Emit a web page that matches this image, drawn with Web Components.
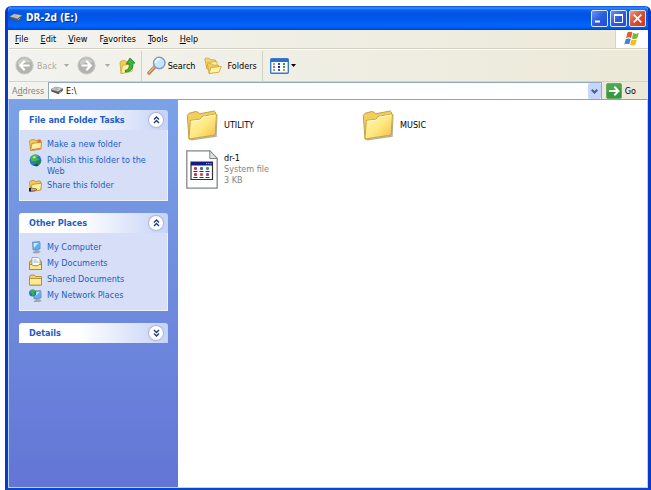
<!DOCTYPE html>
<html lang="en">
<head>
<meta charset="utf-8">
<title>DR-2d (E:)</title>
<style>
  html, body { margin: 0; }
  body {
    min-height: 100vh; box-sizing: border-box; padding: 6px 0 0 5px;
    display: flex; background: #fff; color: #000;
    font: 9px/12px "DejaVu Sans Condensed", "Noto Sans", sans-serif;
  }
  u { text-underline-offset: 1px; }
</style>
</head>
<body>
<xp-window>
  <xp-titlebar slot="title">DR-2d (E:)</xp-titlebar>
  <xp-menubar slot="bars">
    <button><u>F</u>ile</button><button><u>E</u>dit</button><button><u>V</u>iew</button><button>F<u>a</u>vorites</button><button><u>T</u>ools</button><button><u>H</u>elp</button>
  </xp-menubar>
  <xp-toolbar slot="bars"></xp-toolbar>
  <xp-addressbar slot="bars"></xp-addressbar>
  <xp-sidebar slot="side">
    <xp-panel heading="File and Folder Tasks" open>
      <xp-link icon="newfolder">Make a new folder</xp-link>
      <xp-link icon="globe">Publish this folder to the Web</xp-link>
      <xp-link icon="share">Share this folder</xp-link>
    </xp-panel>
    <xp-panel heading="Other Places" open>
      <xp-link icon="computer">My Computer</xp-link>
      <xp-link icon="documents">My Documents</xp-link>
      <xp-link icon="smallfolder">Shared Documents</xp-link>
      <xp-link icon="network">My Network Places</xp-link>
    </xp-panel>
    <xp-panel heading="Details"></xp-panel>
  </xp-sidebar>
  <xp-file icon="folder" name="UTILITY"></xp-file>
  <xp-file icon="folder" name="MUSIC"></xp-file>
  <xp-file icon="sysfile" name="dr-1">System file<br>3 KB</xp-file>
</xp-window>

<script>
const folderShape = `<path d="M.5 3.500 1.500 2l3.500-.6L6.500 2.600l4.600-.6.6 1v7.700L1.700 12.500z" fill="#f3cd59" stroke="#b98a2c" stroke-width=".8"/><path d="M1.700 12.500 3 5.400l9.600-1.200-.8 6.800z" fill="#fff0a0" stroke="#b98a2c" stroke-width=".8"/>`;
const monitorShape = `<path d="M3.500 1.200 10.500.5 11 8 4 9z" fill="#58b0f5" stroke="#5f7fae" stroke-width=".7"/><path d="M4.600 2.200 9.700 1.700l-4.800 5z" fill="#cfeeff"/><path d="m10.500.8 1.300.7.2 6-1 .5z" fill="#a7b6cf"/><path d="m6 9 3-.4.5 1.600 1.800.5-2 1.300H5l-1.200-.8 2.400-.6z" fill="#a4acbc" stroke="#77839a" stroke-width=".4"/>`;
const dots = (x, y, dx, dy, r) => {
  const c = ["#d03058", "#3868d8", "#2a9d6c", "#b83a50", "#d05050", "#8048c0"];
  let s = "";
  for (let j = 0; j < 2; j++) for (let i = 0; i < 3; i++)
    s += `<rect x="${x + i * dx}" y="${y + j * dy}" width="${r}" height="${r}" rx="1" fill="${c[j * 3 + i]}"/>`;
  return s;
};
const ICONS = {
  drive: [14, 10, `<path d="M1 3.4 5.5 1l7.2 1.4.3 2-4.6 3.8L1.4 5.4z" fill="#55585a"/><path d="M1 3.4 5.5 1l7.2 1.4-4.5 3z" fill="#d3d6d7" stroke="#8d9294" stroke-width=".6"/><path d="m3.4 3.2 2.5-1.1 3.7.8-2 1.2z" fill="#a9afb1"/><path d="m9 6.8 2-1.6" stroke="#70c060"/>`],
  back: [19, 19, `<circle cx="9.5" cy="9.5" r="8.6" fill="#b3b3ae" stroke="#c9c9c4"/><path d="M3 6a7.4 7.4 0 0 1 13 0c-4 1-8 0-13 3z" fill="#cbcbc7"/><path d="M9.7 4.8 5.2 9.5l4.5 4.7M5.5 9.5h9" fill="none" stroke="#fff" stroke-width="2.2"/>`],
  forward: [19, 19, `<circle cx="9.5" cy="9.5" r="8.6" fill="#b3b3ae" stroke="#c9c9c4"/><path d="M3 6a7.4 7.4 0 0 1 13 0c-4 1-8 0-13 3z" fill="#cbcbc7"/><path d="m9.3 4.8 4.5 4.7-4.5 4.7M13.5 9.5h-9" fill="none" stroke="#fff" stroke-width="2.2"/>`],
  up: [17, 18, `<path d="M1 5.5 2 4l4-.6 1 1.2 5-.6V14L2 16.5z" fill="#f0ce55" stroke="#c39a32" stroke-width=".7"/><path d="m2 16.5 1.6-8.2 10.6-1.6L13 14.4z" fill="#fff2a0" stroke="#caa03c" stroke-width=".7"/><path d="M6.3 13.2c3.4-.4 4.3-3 3.8-6.4l-2.9.3L11 1l5 5-2.4.3c.9 5.2-1.6 8.400-7.200 8.700z" fill="#3db53a" stroke="#1f7e25" stroke-width=".8"/>`],
  search: [20, 19, `<path d="m2 17 6-6.500" stroke="#b87c48" stroke-width="3.400" stroke-linecap="round"/><path d="m2 16.500 5.500-6" stroke="#f0b880" stroke-width="1.400" stroke-linecap="round"/><circle cx="12.300" cy="7" r="5.700" fill="#c6e6fb" stroke="#7d9cc4" stroke-width="1.500"/><path d="M8.500 7a4 4 0 0 1 4-4" fill="none" stroke="#fff" stroke-width="1.800"/>`],
  folders: [18, 18, `<path d="M.8 2 2 1l3.500.5 1 1.200 5 .3v7L3 12z" fill="#f7d566" stroke="#c9a03a" stroke-width=".8"/><path d="m3 12 .5-6.500L13 4.500V11z" fill="#fff0a4" stroke="#c9a03a" stroke-width=".7"/><path d="m3.500 7.500 1-1 3.200.3 1 1.200 6 .3v6L5 16.500z" fill="#f3cd58" stroke="#c9a03a" stroke-width=".7"/><path d="m5 16.500 2-6 10.300-1-2.300 5.700z" fill="#fff3a8" stroke="#c9a03a" stroke-width=".8"/>`],
  views: [19, 16, `<rect x=".7" y=".7" width="17.600" height="14.600" rx="1" fill="#fff" stroke="#3a78c8" stroke-width="1.400"/><path d="M1 1h17v3H1z" fill="#2870cc"/><g>` +
    [[3, "#7ba3d8"], [8, "#4050c0"], [13, "#409858"]].map(([x, c], i) => [5, 8, 11].map((y, j) => `<rect x="${x}" y="${y}" width="2" height="2" fill="${j == 1 && i == 0 ? "#d86050" : j == 1 && i == 1 ? "#203090" : j == 2 && i == 2 ? "#d09030" : c}"/>`).join("")).join("") + `</g>`],
  flag: [17, 16, `<path d="M3.500 1.500C5 .4 6.700.6 8.400 1.500L7 7c-1.500-.9-3-.9-5 0z" fill="#e8592b"/><path d="M9.200 2c1.800.9 3.600.9 5.600-.2l-1.500 5.400c-1.700 1-3.500 1-5.400.2z" fill="#7cb73c"/><path d="M1.800 8.100c1.700-.9 3.200-.9 4.900 0l-1.400 5.200c-1.500-.8-3-.8-5 .1z" fill="#4580d8"/><path d="M7.500 8.500c1.800.8 3.600.8 5.400-.1l-1.400 5.300c-1.900 1-3.600.9-5.400.1z" fill="#f6bd22"/>`],
  go: [16, 16, `<rect x=".5" y=".5" width="15" height="15" rx="1.500" fill="#369a3c" stroke="#6cab6c"/><path d="M1 1h14v4L1 9z" fill="#5bb35a" opacity=".6"/><path d="M3 8h9M8.300 3.800 12.500 8l-4.200 4.200" fill="none" stroke="#fff" stroke-width="2"/>`],
  smallfolder: [13, 13, `<path d="m.5 4 1-2h3.800l1.200 1.500h6V12H.5z" fill="#f5d362" stroke="#a8842e" stroke-width=".8"/><path d="M.5 5.500h12V12H.5z" fill="#ffeb94" stroke="#a8842e" stroke-width=".8"/>`],
  newfolder: [13, 13, folderShape + `<path d="m8 4.500 1.500-3 3 .5-.7 2.500z" fill="#f06a2c"/><path d="m3 11.500 8.500-1" stroke="#d9762a"/>`],
  share: [13, 13, folderShape + `<path d="M.5 9.300c2-1 3 .8 6 .2l1.500 1c-2 1.500-5 1.700-7.500 1.200z" fill="#e9ae70" stroke="#493322" stroke-width=".6"/><path d="M0 9h2v3.500H0z" fill="#222"/>`],
  globe: [13, 13, `<circle cx="6.500" cy="6.300" r="5.900" fill="#2a79c9"/><path d="M3 2c2-2 5-1.700 6.500-.5L8 4l2 1.500L9 9 6.500 7 3 7.500 1.300 5z" fill="#48b848"/><path d="M7.500 6.500 12 6l-1.500 4-3.500 1.500z" fill="#1c8a3a"/><path d="M3.500 3 6 1.800l1 1.700-2.500 1.300z" fill="#b9eaa0"/><path d="m4 11 3.500-1 2.500 1-2 1.500z" fill="#185828"/>`],
  computer: [13, 13, monitorShape],
  documents: [13, 13, `<path d="M.5 5 3 2.500h7.500l2 2.500v7.500H.5z" fill="#e8c250" stroke="#9c7d34" stroke-width=".8"/><path d="M3 .5h6L11 2.500V9H3z" fill="#fff" stroke="#7a90b8" stroke-width=".7"/><path d="M4.500 3h3M4.500 5h5" stroke="#6b95d8" stroke-width=".8"/><path d="M.5 7.500H3l1 1.200h5l1-1.200h2.500v5H.5z" fill="#ffe78a" stroke="#9c7d34" stroke-width=".8"/>`],
  network: [13, 13, `<g transform="translate(1 1)">${monitorShape}</g><circle cx="3.700" cy="4" r="3.600" fill="#2478b8"/><path d="M1 2C3 0 6 .6 6.700 2.300L5 3.500l.7 2L3.500 7 2.700 4.500z" fill="#3fb04a"/>`],
  folder: [32, 32, `<defs><linearGradient id="f" x1="0" y1="0" x2="1" y2="1"><stop offset="0" stop-color="#fff6b0"/><stop offset=".5" stop-color="#ffe883"/><stop offset="1" stop-color="#f1c042"/></linearGradient></defs><path d="m3 30.500 26.500-4L30.500 5l1 .8-.8 22L5 31.500z" fill="#8d8b80" opacity=".7"/><path d="M1.300 6.500 3 4.300 9.500 2.500l2.300.5 1.700 1.800L28.300 2l1.200 1.200V26L3 30z" fill="#f2ce5c" stroke="#c4a04a" stroke-width="1"/><path d="M3 30 4.300 11.500l9.700-1.300 2.400-2.900L30.500 5l-1.300 21z" fill="url(#f)" stroke="#c9a64c" stroke-width="1"/><path d="m5.200 12.300 9.300-1.200 2.300-2.900L29.500 6" fill="none" stroke="#fffbd8"/>`],
  sysfile: [32, 39, `<path d="M.8.8h23l7.400 7.700v29.700H.8z" fill="#fff" stroke="#7f8884" stroke-width="1.300"/><path d="M23.800.8v7.700h7.400z" fill="#dfe3e1" stroke="#7f8884"/><path d="M5 12h21.500v17.500H5z" fill="#fff" stroke="#333" stroke-width="1.200"/><path d="M5 12h21.500v3.500H5z" fill="#151a80"/><path d="M20 13.700h5.500" stroke="#ccc" stroke-dasharray="1.200 1"/>${dots(8, 17, 6, 6, 3)}<path d="M7.500 21.500h4M13.500 21.500h4M19.500 21.500h4M7.500 27.500h4M13.500 27.500h4M19.500 27.500h4" stroke="#333" stroke-width="1"/>`],
  min: [9, 9, `<path d="M0 7.500h5" stroke="#fff" stroke-width="2"/>`],
  max: [9, 9, `<path d="M.5.500h8v8h-8z" fill="none" stroke="#fff"/><path d="M0 1h9" stroke="#fff" stroke-width="2"/>`],
  close: [9, 9, `<path d="m.7.7 7.600 7.600m0-7.600L.7 8.300" stroke="#fff" stroke-width="1.700"/>`],
  tri: [5, 3, `<path d="M0 0h5L2.500 3z" fill="currentColor"/>`],
  chevron: [7, 5, `<path d="m.7.8 2.800 2.700L6.300.8" fill="none" stroke="#43618f" stroke-width="2"/>`],
  fold: [7, 8, `<path d="m1 3.500 2.500-2.500L6 3.500M1 7l2.500-2.500L6 7" fill="none" stroke="#1c3a78" stroke-width="1.300"/>`],
  unfold: [7, 8, `<path d="m1 1 2.500 2.500L6 1M1 4.500 3.500 7 6 4.500" fill="none" stroke="#1c3a78" stroke-width="1.300"/>`]
};

const BUTTON = `button { font: inherit; color: inherit; border: 0; background: none; padding: 0; margin: 0; display: flex; align-items: center; }`;
function define(name, css, html) {
  customElements.define(name, class extends HTMLElement {
    constructor() {
      super();
      const root = this.attachShadow({ mode: "open" });
      const markup = typeof html === "function" ? html(this) : html;
      root.innerHTML = `<style>${BUTTON}${css}</style>${markup}`;
    }
  });
}

define("xp-icon", `:host { display: inline-flex; flex: none; } svg { display: block; }`, el => {
  const [w, h, body] = ICONS[el.getAttribute("name")];
  return `<svg width="${w}" height="${h}" viewBox="0 0 ${w} ${h}" aria-hidden="true">${body}</svg>`;
});

define("xp-window", `
  :host { flex: 1; min-width: 0; display: flex; flex-direction: column; box-sizing: border-box; border: solid; border-width: 0 3px 2px; border-color: #0831d9 #0a38c8 #0a48c8; border-radius: 6px 6px 0 0; overflow: hidden; background: #fff; }
  .bars { background: linear-gradient(90deg, #f3f3ef, #ece9d8); border-left: 1px solid #f8f8f4; }
  main { flex: 1; display: flex; border: 1px solid #b9d4fa; border-top-color: #8fa5b0; }
  .files { flex: 1; display: grid; grid-template-columns: repeat(auto-fill, 176px); grid-auto-rows: 40px; row-gap: 4px; padding: 5px 0 0 8px; align-content: start; }
`, `<slot name="title"></slot><div class="bars"><slot name="bars"></slot></div><main><slot name="side"></slot><div class="files"><slot></slot></div></main>`);

define("xp-titlebar", `
  :host { display: flex; align-items: center; height: 24px; box-sizing: border-box; padding: 0 2px 0 1px; gap: 3px; color: #fff; background: linear-gradient(#0850d8 0, #3a8cff 2px, #0860f0 4px, #0054e3 8px, #0058ec 13px, #0066ff 20px, #0050d8 23px, #003cb8); }
  h1 { flex: 1; margin: 0; font: bold 10px/16px "DejaVu Sans Condensed", sans-serif; text-shadow: 1px 1px #0a2c88; }
  .b { display: flex; gap: 2px; }
  button { width: 17px; height: 17px; justify-content: center; border: 1px solid #dfe8fb; border-radius: 2px; background: linear-gradient(135deg, #6c94f0, #2c5ce0 50%, #1c4fd8); }
  .x { background: linear-gradient(135deg, #ee9a80, #dc4c2c 50%, #c83c1c); }
`, `<xp-icon name="drive"></xp-icon><h1><slot></slot></h1><div class="b"><button aria-label="Minimize"><xp-icon name="min"></xp-icon></button><button aria-label="Maximize"><xp-icon name="max"></xp-icon></button><button class="x" aria-label="Close"><xp-icon name="close"></xp-icon></button></div>`);

define("xp-menubar", `
  :host { display: flex; height: 18px; border-bottom: 1px solid #d3d1c4; }
  nav { flex: 1; display: flex; align-items: center; gap: 12px; padding-left: 6px; }
  ::slotted(button) { font: inherit; color: inherit; border: 0; background: none; padding: 0; margin: 0; }
  .flag { width: 32px; display: flex; align-items: center; justify-content: center; background: #fff; border-left: 1px solid #d8d5c6; }
`, `<nav><slot></slot></nav><div class="flag"><xp-icon name="flag"></xp-icon></div>`);

define("xp-toolbar", `
  :host { display: flex; align-items: center; height: 33px; box-sizing: border-box; padding-left: 6px; border-top: 1px solid #fbfbf8; border-bottom: 1px solid #d6d4c8; }
  .off { color: #aaa99f; gap: 3px; }
  .drop { width: 20px; justify-content: center; }
  .fwd { width: 23px; justify-content: center; }
  hr { width: 1px; height: 30px; margin: 0 5px; border: 0; background: #d3d1c4; }
  .s { gap: 1px; }
  .f { margin-left: 9px; gap: 5px; }
  .v { margin: 0 2px; gap: 2px; }
`, `<button class="off"><xp-icon name="back"></xp-icon>Back</button><button class="off drop" aria-label="Back history"><xp-icon name="tri"></xp-icon></button>
<button aria-label="Forward"><xp-icon name="forward"></xp-icon></button><button class="off fwd" aria-label="Forward history"><xp-icon name="tri"></xp-icon></button>
<button aria-label="Up"><xp-icon name="up"></xp-icon></button><hr>
<button class="s"><xp-icon name="search"></xp-icon>Search</button><button class="f"><xp-icon name="folders"></xp-icon>Folders</button><hr>
<button class="v" aria-label="Views"><xp-icon name="views"></xp-icon><xp-icon name="tri"></xp-icon></button>`);

define("xp-addressbar", `
  :host { display: flex; align-items: center; height: 17px; padding-left: 3px; }
  label { width: 36px; color: #84837a; }
  .box { flex: 1; display: flex; align-items: center; align-self: stretch; gap: 2px; background: #fff; border: 1px solid #8fa9c4; border-bottom: 0; padding: 0 0 0 1px; }
  input { flex: 1; min-width: 0; border: 0; padding: 0; outline: 0; background: none; font: inherit; color: inherit; }
  .drop { align-self: stretch; width: 13px; justify-content: center; background: #c6d5fb; border-radius: 2px; }
  .go { gap: 3px; padding: 0 12px 0 4px; }
`, `<label for="a">A<u>d</u>dress</label><div class="box"><xp-icon name="drive"></xp-icon><input id="a" value="E:\\"><button class="drop" aria-label="Show addresses"><xp-icon name="chevron"></xp-icon></button></div><button class="go"><xp-icon name="go"></xp-icon>Go</button>`);

define("xp-sidebar", `
  :host { flex: none; width: 169px; box-sizing: border-box; padding: 10px; display: flex; flex-direction: column; gap: 12px; background: linear-gradient(#7ba2e7, #6375d6); }
`, `<slot></slot>`);

define("xp-panel", `
  :host { display: block; color: #215dc6; }
  header { display: flex; align-items: center; justify-content: space-between; height: 20px; padding: 0 5px 0 10px; border-radius: 3px 3px 0 0; background: linear-gradient(90deg, #fff 40%, #c6d3f7); }
  h2 { margin: 0; font: bold 9px/12px "DejaVu Sans Condensed", sans-serif; }
  button { width: 14px; height: 14px; justify-content: center; border-radius: 50%; background: #fff; box-shadow: 0 0 1px 1px #a9b6d8; }
  .body { display: flex; flex-direction: column; gap: 2px; padding: 8px 9px 7px; background: #d6dff7; border: 1px solid #eef2fd; border-top: 0; }
`, el => { const open = el.hasAttribute("open"), t = el.getAttribute("heading");
  return `<header><h2>${t}</h2><button aria-label="Toggle ${t}"><xp-icon name="${open ? "fold" : "unfold"}"></xp-icon></button></header>${open ? `<div class="body"><slot></slot></div>` : ""}`; });

define("xp-link", `
  :host { display: block; }
  a { display: flex; align-items: flex-start; gap: 5px; color: #215dc6; text-decoration: none; line-height: 11px; min-height: 14px; }
  span { padding-top: 1px; max-width: 104px; }
`, el => `<a href="#"><xp-icon name="${el.getAttribute("icon")}"></xp-icon><span><slot></slot></span></a>`);

define("xp-file", `
  :host { display: flex; align-items: center; gap: 6px; line-height: 11px; color: #85857d; }
  b { display: block; font-weight: normal; color: #000; }
`, el => `<xp-icon name="${el.getAttribute("icon")}"></xp-icon><div><b>${el.getAttribute("name")}</b><slot></slot></div>`);
</script>
</body>
</html>
